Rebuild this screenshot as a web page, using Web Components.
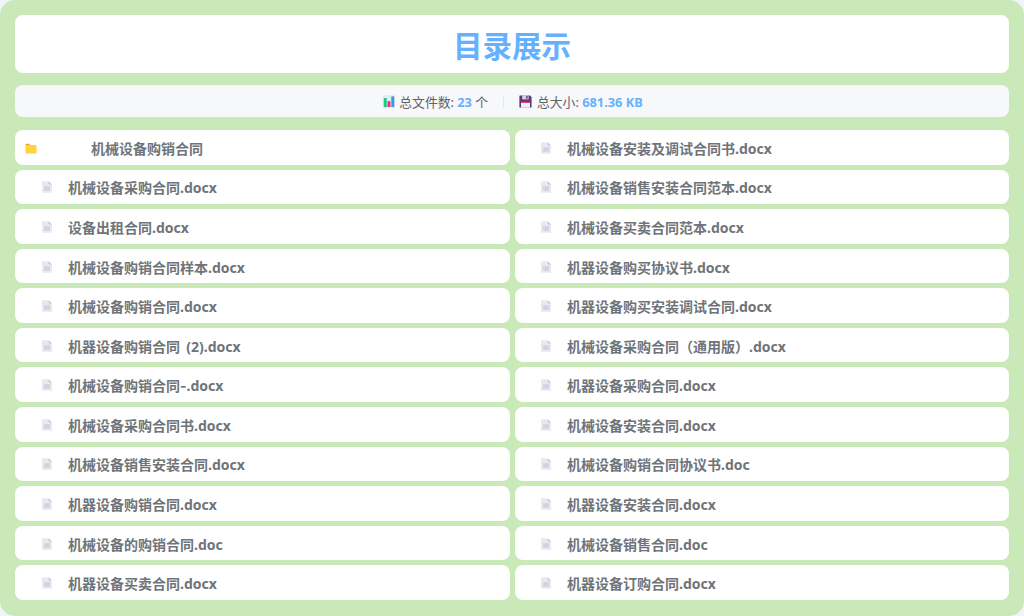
<!DOCTYPE html>
<html lang="zh">
<head>
<meta charset="utf-8">
<title>目录展示</title>
<style>
  html, body { margin: 0; height: 100%; background: #f0f4f8; }
  body { font-family: "Noto Sans", "Noto Sans CJK SC", sans-serif; overflow: hidden; }
  dir-row span { font-family: Inter, sans-serif; }
</style>
</head>
<body>
<dir-page>
  <dir-title>目录展示</dir-title>
  <dir-stats></dir-stats>
  <dir-list></dir-list>
</dir-page>

<script>
const icons = {
  folder: `<svg viewBox="0 0 12 12" width="12" height="12">
    <path d="M.5 2.4Q.5 1.8 1.1 1.8H4.2L5.3 3H.5Z" fill="#f2a51f"/>
    <path d="M.5 2.9H10.8Q11.5 2.9 11.5 3.6V10.8Q11.5 11.4 10.8 11.4H1.1Q.5 11.4 .5 10.8Z" fill="#ffd23f"/>
  </svg>`,
  file: `<svg viewBox="0 0 12 12" width="12" height="12">
    <path d="M1 .8Q1 .2 1.6 .2H7.6L11 3.4V11.2Q11 11.8 10.4 11.8H1.6Q1 11.8 1 11.2Z" fill="#ece6f3"/>
    <path d="M7.6 .2L11 3.4H8.2Q7.6 3.4 7.6 2.8Z" fill="#cdc3dd"/>
    <path d="M3 5.2H9V9.8H3Z" fill="#d5d2dd"/>
  </svg>`,
  chart: `<svg viewBox="-1.5 0 13 13" width="13" height="13">
    <rect x=".3" y=".3" width="12.4" height="12.4" rx="1" fill="#e8e6ee"/>
    <rect x="1.3" y="3" width="2.9" height="9" fill="#1fc98a"/>
    <rect x="5" y="6.2" width="2.9" height="5.8" fill="#ee2f7c"/>
    <rect x="8.8" y="1.4" width="2.9" height="10.6" fill="#2b9fe6"/>
  </svg>`,
  disk: `<svg viewBox="0 0 13 13" width="13" height="13">
    <path d="M.4 1Q.4 .4 1 .4H11L12.6 2V12Q12.6 12.6 12 12.6H1Q.4 12.6 .4 12Z" fill="#5a3a78"/>
    <rect x="3.2" y=".4" width="6.4" height="4" fill="#d8d3e2"/>
    <rect x="7.2" y="1" width="1.4" height="2.7" fill="#5a3a78"/>
    <rect x="2" y="6.8" width="9" height="1.2" fill="#e8416a"/>
    <rect x="2" y="8" width="9" height="4.6" fill="#f1eef4"/>
  </svg>`
};

const files = [
  ['folder', '机械设备购销合同'],
  ['file', '机械设备安装及调试合同书.docx'],
  ['file', '机械设备采购合同.docx'],
  ['file', '机械设备销售安装合同范本.docx'],
  ['file', '设备出租合同.docx'],
  ['file', '机械设备买卖合同范本.docx'],
  ['file', '机械设备购销合同样本.docx'],
  ['file', '机器设备购买协议书.docx'],
  ['file', '机械设备购销合同.docx'],
  ['file', '机器设备购买安装调试合同.docx'],
  ['file', '机器设备购销合同 (2).docx'],
  ['file', '机械设备采购合同（通用版）.docx'],
  ['file', '机械设备购销合同-.docx'],
  ['file', '机器设备采购合同.docx'],
  ['file', '机械设备采购合同书.docx'],
  ['file', '机械设备安装合同.docx'],
  ['file', '机械设备销售安装合同.docx'],
  ['file', '机械设备购销合同协议书.doc'],
  ['file', '机器设备购销合同.docx'],
  ['file', '机器设备安装合同.docx'],
  ['file', '机械设备的购销合同.doc'],
  ['file', '机械设备销售合同.doc'],
  ['file', '机器设备买卖合同.docx'],
  ['file', '机器设备订购合同.docx']
];

class DirPage extends HTMLElement {
  constructor() {
    super();
    this.attachShadow({ mode: 'open' }).innerHTML = `
      <style>
        :host {
          display: flex;
          flex-direction: column;
          box-sizing: border-box;
          height: 616px;
          padding: 15px 15px 16px;
          background: #c9e9b9;
          border-radius: 15px;
        }
      </style>
      <slot></slot>`;
  }
}

class DirTitle extends HTMLElement {
  constructor() {
    super();
    this.attachShadow({ mode: 'open' }).innerHTML = `
      <style>
        :host {
          display: flex;
          align-items: center;
          justify-content: center;
          height: 58px;
          margin-bottom: 12px;
          background: #fff;
          border-radius: 8px;
          color: #66b1ff;
          font-size: 29.5px;
          font-weight: 700;
        }
      </style>
      <slot></slot>`;
  }
}

class DirStats extends HTMLElement {
  constructor() {
    super();
    this.attachShadow({ mode: 'open' }).innerHTML = `
      <style>
        :host {
          display: flex;
          align-items: center;
          justify-content: center;
          box-sizing: border-box;
          height: 32px;
          padding-top: 1px;
          margin-bottom: 13px;
          background: #f6f8fa;
          border-radius: 8px;
          color: #606266;
          font-size: 12.8px;
        }
        .item { display: flex; align-items: center; white-space: pre; }
        svg { display: block; margin-right: 5px; overflow: visible; }
        b { color: #66b1ff; font-weight: 700; }
        .sep { width: 1px; height: 12px; background: #e4e7ed; margin: 0 15px; }
      </style>
      <span class="item">${icons.chart}总文件数: <b>23</b> 个</span>
      <span class="sep"></span>
      <span class="item">${icons.disk}总大小: <b>681.36 KB</b></span>`;
  }
}

class DirList extends HTMLElement {
  constructor() {
    super();
    this.attachShadow({ mode: 'open' }).innerHTML = `
      <style>
        :host {
          display: grid;
          flex: 1;
          grid-template-columns: 495px 494px;
          grid-auto-rows: 1fr;
          gap: 5px;
        }
      </style>
      <slot></slot>`;
    files.forEach(([kind, name]) => {
      const row = document.createElement('dir-row');
      row.setAttribute('kind', kind);
      // the hyphen is wider in the reference than in Noto Sans
      row.innerHTML = name.replace('-', '<span>-</span>');
      this.appendChild(row);
    });
  }
}

class DirRow extends HTMLElement {
  connectedCallback() {
    if (this.shadowRoot) return;
    const kind = this.getAttribute('kind');
    this.attachShadow({ mode: 'open' }).innerHTML = `
      <style>
        :host {
          display: flex;
          align-items: center;
          box-sizing: border-box;
          min-height: 0;
          padding: 1px 0 0 26px;
          background: #fff;
          border-radius: 8px;
          color: #6f7479;
          font-size: 14px;
          font-weight: 700;
          word-spacing: 2.6px;
          white-space: nowrap;
        }
        :host(:nth-child(even)) { padding-left: 25px; }
        :host([kind="folder"]) { padding-left: 10px; }
        svg { display: block; flex: none; }
        .icon { display: flex; width: 12px; margin-right: 15px; }
        .name { display: block; }
        :host([kind="folder"]) .icon { margin-right: 54px; }
      </style>
      <span class="icon">${icons[kind]}</span><span class="name"><slot></slot></span>`;
  }
}

customElements.define('dir-page', DirPage);
customElements.define('dir-title', DirTitle);
customElements.define('dir-stats', DirStats);
customElements.define('dir-row', DirRow);
customElements.define('dir-list', DirList);
</script>
</body>
</html>
